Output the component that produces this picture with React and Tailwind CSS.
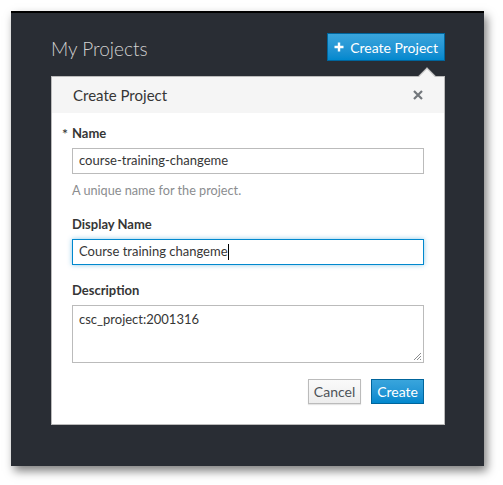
export default function App() {
  return (
    <div className="w-[503px] h-[485px] bg-white pl-[11px] pt-[11px] font-['Lato',sans-serif]">
      <div className="w-[473px] h-[455px] bg-[#292d34] border-t-2 border-black shadow-[3px_5px_9px_rgba(0,0,0,0.5)] pl-[40px] pr-[39px] pt-[20px]">
        <div className="flex items-center justify-between h-[28px]">
          <h1 className="text-[19px] font-light text-[#d1d1d1] leading-none mt-[2px]">My Projects</h1>
          <button className="h-[28px] px-[6px] flex items-center gap-[6px] bg-gradient-to-b from-[#39a5dc] to-[#0088ce] border border-[#00659c] text-white text-[14px]">
            <svg width="10" height="10" viewBox="0 0 10 10">
              <path d="M5 0.5v9M0.5 5h9" stroke="white" strokeWidth="2.4" />
            </svg>
            Create Project
          </button>
        </div>

        <div className="relative mt-[15px] bg-white border border-[#bbbbbb]">
          <div className="absolute -top-[7px] right-[11px] w-[12px] h-[12px] rotate-45 bg-[#f5f5f5] border-l border-t border-[#bbbbbb]" />
          <div className="relative h-[36px] bg-[#f5f5f5] flex items-center justify-between pl-[21px] pr-[21px]">
            <span className="text-[15px] text-[#363636]">Create Project</span>
            <svg width="10" height="10" viewBox="0 0 10 10">
              <path d="M1 1l8 8M9 1l-8 8" stroke="#72767b" strokeWidth="2.2" />
            </svg>
          </div>

          <div className="px-[20px] pt-[12px] pb-[20px] text-[#363636]">
            <label className="relative block h-[17px] leading-[17px] text-[13px] font-bold">
              <span className="absolute -left-[10px] text-[14px] font-semibold">*</span>
              Name
            </label>
            <div className="mt-[6px] h-[26px] border border-[#bbbbbb] px-[6px] flex items-center text-[13px]">
              course-training-changeme
            </div>
            <div className="mt-[8px] h-[17px] leading-[17px] text-[12.7px] text-[#8b8d8f]">A unique name for the project.</div>

            <label className="block mt-[17px] h-[17px] leading-[17px] text-[13px] font-bold">Display Name</label>
            <div className="mt-[6px] h-[26px] border border-[#0088ce] shadow-[0_0_5px_rgba(0,136,206,0.45)] px-[6px] flex items-center text-[13px]">
              Course training changeme
              <span className="w-px h-[16px] bg-black" />
            </div>

            <label className="block mt-[17px] h-[17px] leading-[17px] text-[13px] font-bold">Description</label>
            <div className="relative mt-[6px] h-[58px] border border-[#bbbbbb] px-[6px] pt-[5px] text-[13px] leading-[17px]">
              csc_project:2001316
              <svg className="absolute right-[1px] bottom-[1px]" width="9" height="9" viewBox="0 0 9 9">
                <path d="M8 1L1 8M8 4L4 8M8 7L7 8" stroke="#8b8d8f" strokeWidth="1" />
              </svg>
            </div>

            <div className="mt-[16px] flex justify-end gap-[10px]">
              <button className="h-[25px] px-[5px] bg-gradient-to-b from-[#fafafa] to-[#ededed] border border-[#bbbbbb] text-[#4d5258] text-[14px] shadow-[0_1px_1px_rgba(0,0,0,0.1)]">
                Cancel
              </button>
              <button className="h-[25px] px-[5px] bg-gradient-to-b from-[#39a5dc] to-[#0088ce] border border-[#00659c] text-white text-[14px]">
                Create
              </button>
            </div>
          </div>
        </div>
      </div>
    </div>
  );
}
